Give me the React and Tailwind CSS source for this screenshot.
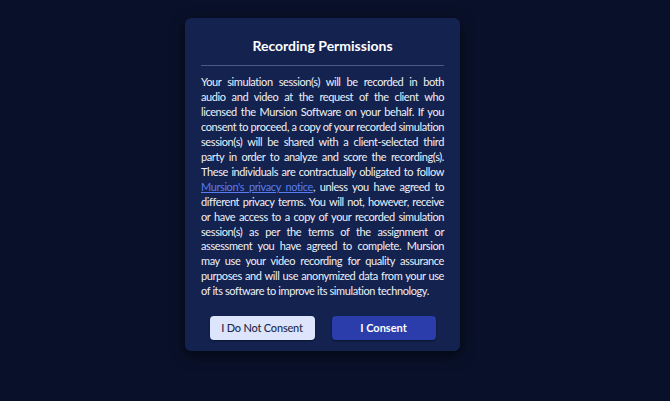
export default function App() {
  const lines = [
    "Your simulation session(s) will be recorded in both",
    "audio and video at the request of the client who",
    "licensed the Mursion Software on your behalf. If you",
    "consent to proceed, a copy of your recorded simulation",
    "session(s) will be shared with a client-selected third",
    "party in order to analyze and score the recording(s).",
    "These individuals are contractually obligated to follow",
    null,
    "different privacy terms. You will not, however, receive",
    "or have access to a copy of your recorded simulation",
    "session(s) as per the terms of the assignment or",
    "assessment you have agreed to complete. Mursion",
    "may use your video recording for quality assurance",
    "purposes and will use anonymized data from your use",
  ];
  return (
    <div
      className="w-[670px] h-[401px] bg-[#09112a] flex items-start"
      style={{ fontFamily: "Lato, 'Noto Sans', sans-serif" }}
    >
      <div className="ml-[185px] mt-[18px] w-[275px] rounded-[6px] bg-[#13224f] shadow-[0_4px_14px_rgba(0,0,0,0.6)] pt-[17px] pb-[11px] px-[16px] flex flex-col">
        <h1 className="text-[14px] leading-[22px] font-bold text-white text-center">
          Recording Permissions
        </h1>
        <div className="mt-[8px] h-px bg-[#4a5a86]" />
        <div className="mt-[9px] -mr-[2px] text-[11px] leading-[14.95px] tracking-[-0.4px] text-[#eef1f8]">
          {lines.map((l, i) =>
            l === null ? (
              <div key={i} className="mr-[2px] text-justify [text-align-last:justify]">
                <a className="text-[#5b7cf0] underline">Mursion's privacy notice</a>, unless you have agreed to
              </div>
            ) : (
              <div key={i} className="mr-[2px] text-justify [text-align-last:justify]">
                {l}
              </div>
            )
          )}
          <div>of its software to improve its simulation technology.</div>
        </div>
        <div className="mt-[17px] flex justify-center gap-[17px]">
          <button className="w-[105px] h-[24px] rounded-[4px] bg-[#dce5fc] text-[#1f2a4a] text-[11px] tracking-[-0.2px] font-medium shadow-[0_1px_2px_rgba(0,0,0,0.4)]">
            I Do Not Consent
          </button>
          <button className="w-[104px] h-[24px] rounded-[4px] bg-[#2a3dab] text-white text-[11px] font-bold shadow-[0_1px_2px_rgba(0,0,0,0.4)]">
            I Consent
          </button>
        </div>
      </div>
    </div>
  );
}
